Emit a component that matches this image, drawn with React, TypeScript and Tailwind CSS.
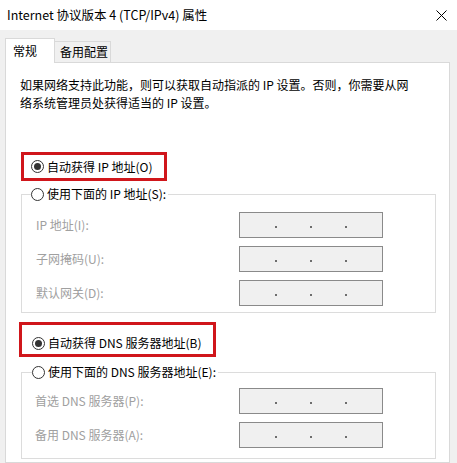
import React from 'react';

const FONT = { fontFamily: '"Noto Sans CJK SC", "Noto Sans", sans-serif' };

function Radio({ checked }: { checked?: boolean }) {
  return (
    <span className="w-[13px] h-[13px] rounded-full border border-[#333333] bg-white flex items-center justify-center shrink-0">
      {checked && <span className="w-[7px] h-[7px] rounded-full bg-[#333333]" />}
    </span>
  );
}

function IpBox() {
  return (
    <div className="w-[144px] h-[26px] bg-[#f0f0f0] border border-[#8a8a8a] flex items-center justify-center gap-[33px] pt-[3px]">
      <span className="w-[2px] h-[2px] bg-[#6d6d6d]" />
      <span className="w-[2px] h-[2px] bg-[#6d6d6d]" />
      <span className="w-[2px] h-[2px] bg-[#6d6d6d]" />
    </div>
  );
}

function FieldRow({ label, width = 203 }: { label: string; width?: number }) {
  return (
    <div className="flex items-center h-[26px]">
      <span className={(width === 203 ? 'w-[203px]' : 'w-[204px]') + ' text-[12px] text-[#a0a0a0] leading-[18px]'}>{label}</span>
      <IpBox />
    </div>
  );
}

export default function App() {
  return (
    <div className="w-[457px] h-[463px] overflow-hidden bg-[#f0f0f0] flex flex-col text-[#1a1a1a]" style={FONT}>
      {/* Title bar */}
      <div className="h-[30px] bg-white flex items-center justify-between pl-[7px] pr-[10px] shrink-0">
        <span className="text-[12.5px] leading-[18px] text-black">Internet 协议版本 4 (TCP/IPv4) 属性</span>
        <svg width="11" height="11" viewBox="0 0 11 11" className="text-black">
          <path d="M0.5 0.5 L10.5 10.5 M10.5 0.5 L0.5 10.5" stroke="currentColor" strokeWidth="1" />
        </svg>
      </div>

      <div className="flex-1 flex flex-col pt-[8px] pl-[5px] pr-[7px]">
        {/* Tabs */}
        <div className="flex items-end">
          <div className="relative z-10 -mb-px w-[50px] h-[25px] bg-white border border-b-0 border-[#d9d9d9] flex items-center pl-[7px] text-[12px] text-black">
            常规
          </div>
          <div className="w-[56px] h-[21px] border border-l-0 border-b-0 border-[#d9d9d9] flex items-center pl-[5px] text-[12px] text-black">
            备用配置
          </div>
        </div>

        {/* Panel */}
        <div className="flex-1 bg-white border border-[#d9d9d9] pt-[13px] flex flex-col">
          <p className="pl-[14px] text-[12px] leading-[18px] text-black">
            如果网络支持此功能，则可以获取自动指派的 IP 设置。否则，你需要从网
            <br />
            络系统管理员处获得适当的 IP 设置。
          </p>

          <div className="mt-[40px] ml-[15px] w-[146px] h-[29px] border-[3px] border-[#d0161b] flex items-center pl-[7px] gap-[3px]">
            <Radio checked />
            <span className="text-[12px] leading-[18px] text-black whitespace-nowrap">自动获得 IP 地址(O)</span>
          </div>

          <fieldset className="mt-[4px] ml-[15px] w-[415px] border border-[#dcdcdc]">
            <legend className="ml-[9px] pr-[2px] flex items-center gap-[3px] h-[18px]">
              <Radio />
              <span className="text-[12px] leading-[18px] text-black whitespace-nowrap">使用下面的 IP 地址(S):</span>
            </legend>
            <div className="pl-[14px] pt-[9px] pb-[6px] flex flex-col gap-[8px]">
              <FieldRow label="IP 地址(I):" />
              <FieldRow label="子网掩码(U):" />
              <FieldRow label="默认网关(D):" />
            </div>
          </fieldset>

          <div className="mt-[9px] ml-[13px] w-[197px] h-[35px] border-[3px] border-[#d0161b] flex items-center pl-[10px] pt-[7px] gap-[3px]">
            <Radio checked />
            <span className="text-[12px] leading-[18px] text-black whitespace-nowrap">自动获得 DNS 服务器地址(B)</span>
          </div>

          <fieldset className="mt-[6px] ml-[15px] w-[415px] border border-[#dcdcdc]">
            <legend className="ml-[10px] pr-[2px] flex items-center gap-[3px] h-[18px]">
              <Radio />
              <span className="text-[12px] leading-[18px] text-black whitespace-nowrap">使用下面的 DNS 服务器地址(E):</span>
            </legend>
            <div className="pl-[13px] pt-[7px] pb-[10px] flex flex-col gap-[8px]">
              <FieldRow label="首选 DNS 服务器(P):" width={204} />
              <FieldRow label="备用 DNS 服务器(A):" width={204} />
            </div>
          </fieldset>
        </div>
      </div>
    </div>
  );
}
